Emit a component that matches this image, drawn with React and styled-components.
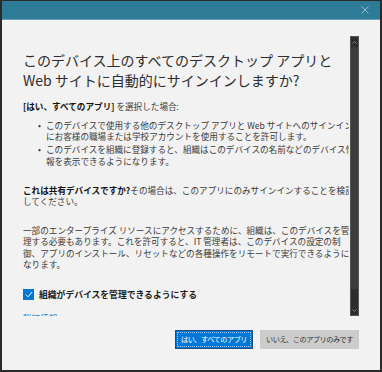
import React from "react";
import styled, { createGlobalStyle } from "styled-components";

const GlobalStyle = createGlobalStyle`
  html, body {
    margin: 0;
    padding: 0;
    background: #1f1f1f;
  }
  * {
    box-sizing: border-box;
  }
`;

const FONT = `"Noto Sans CJK JP", "Noto Sans", sans-serif`;

const Window = styled.div`
  width: 382px;
  height: 372px;
  display: flex;
  flex-direction: column;
  background: #f2f2f2;
  border-style: solid;
  border-color: #2a2a2a;
  border-width: 1px 2px 2px 2px;
  font-family: ${FONT};
  overflow: hidden;
`;

const TitleBar = styled.div`
  height: 19px;
  flex: none;
  background: #2e7b97;
  border-bottom: 1px solid #67a2b8;
  display: flex;
  justify-content: flex-end;
  align-items: center;
  padding-right: 9px;
`;

const CloseButton = styled.div`
  width: 12px;
  height: 12px;
  display: flex;
  align-items: center;
  justify-content: center;
  color: #8fbccd;
`;

const Main = styled.div`
  flex: none;
  display: flex;
  padding-top: 16px;
  height: 296px;
`;

const Content = styled.div`
  flex: 1;
  min-width: 0;
  overflow: hidden;
  padding: 14px 0 0 21px;
  white-space: nowrap;
  color: #3a3a3a;
  font-size: 8.6px;
  line-height: 11.5px;
`;

const Title = styled.h1`
  margin: 0;
  font-size: 14px;
  line-height: 20px;
  font-weight: 400;
  color: #2d2d2d;
`;

const Para = styled.p`
  margin: ${(p) => p.$top || 0}px 0 0;
`;

const Strong = styled.b`
  font-weight: 700;
  color: #111;
`;

const List = styled.ul`
  list-style: none;
  margin: 7px 0 0;
  padding: 0 0 0 15px;
  display: flex;
  flex-direction: column;
  gap: 1.5px;
`;

const Item = styled.li`
  display: flex;
`;

const Bullet = styled.span`
  width: 8px;
  flex: none;
`;

const CheckRow = styled.label`
  margin-top: 18px;
  display: flex;
  align-items: center;
  gap: 5px;
  font-weight: 700;
  color: #1c1c1c;
  font-size: 8.8px;
  line-height: 12px;
`;

const Box = styled.span`
  width: 11px;
  height: 11px;
  flex: none;
  background: #0078d7;
  display: flex;
  align-items: center;
  justify-content: center;
`;

const Link = styled.div`
  margin-top: 12px;
  color: #0067b8;
`;

const Scrollbar = styled.div`
  width: 9px;
  flex: none;
  margin: 0 21px 0 1px;
  height: 280px;
  background: #2d2d2d;
  border: 1px solid #555;
  display: flex;
  flex-direction: column;
`;

const Arrow = styled.div`
  height: 10px;
  flex: none;
  display: flex;
  align-items: center;
  justify-content: center;
  color: #8a8a8a;
`;

const Thumb = styled.div`
  flex: 1;
  background: #3c3c3c;
  margin-bottom: ${(p) => p.$gap}px;
`;

const Footer = styled.div`
  display: flex;
  justify-content: flex-end;
  gap: 7px;
  padding: 14px 21px 0 0;
`;

const Button = styled.button`
  width: ${(p) => p.$w}px;
  height: 19px;
  padding: 0;
  white-space: nowrap;
  font-family: ${FONT};
  font-size: 7.2px;
  letter-spacing: -0.5px;
  line-height: 17px;
  border: 1px solid ${(p) => (p.$primary ? "#1b4f86" : "#cccccc")};
  background: ${(p) => (p.$primary ? "#0078d7" : "#cccccc")};
  color: ${(p) => (p.$primary ? "#ffffff" : "#333333")};
  outline: ${(p) => (p.$primary ? "1px dotted #9ccaf0" : "none")};
  outline-offset: -3px;
`;

const Chevron = ({ up }) => (
  <svg width="5" height="3" viewBox="0 0 5 3">
    <path
      d={up ? "M0.5 2.5 L2.5 0.5 L4.5 2.5" : "M0.5 0.5 L2.5 2.5 L4.5 0.5"}
      fill="none"
      stroke="currentColor"
      strokeWidth="0.9"
    />
  </svg>
);

export default function App() {
  return (
    <>
      <GlobalStyle />
      <Window>
        <TitleBar>
          <CloseButton>
            <svg width="8" height="8" viewBox="0 0 8 8">
              <path d="M0.5 0.5 L7.5 7.5 M7.5 0.5 L0.5 7.5" stroke="currentColor" strokeWidth="1" />
            </svg>
          </CloseButton>
        </TitleBar>
        <Main>
          <Content>
            <Title>
              このデバイス上のすべてのデスクトップ アプリと
              <br />
              Web サイトに自動的にサインインしますか?
            </Title>
            <Para $top={11}>
              <Strong>[はい、すべてのアプリ]</Strong> を選択した場合:
            </Para>
            <List>
              <Item>
                <Bullet>•</Bullet>
                <span>
                  このデバイスで使用する他のデスクトップ アプリと Web サイトへのサインイン
                  <br />
                  にお客様の職場または学校アカウントを使用することを許可します。
                </span>
              </Item>
              <Item>
                <Bullet>•</Bullet>
                <span>
                  このデバイスを組織に登録すると、組織はこのデバイスの名前などのデバイス情
                  <br />
                  報を表示できるようになります。
                </span>
              </Item>
            </List>
            <Para $top={17.5}>
              <Strong>これは共有デバイスですか?</Strong>その場合は、このアプリにのみサインインすることを検討
              <br />
              してください。
            </Para>
            <Para $top={17}>
              一部のエンタープライズ リソースにアクセスするために、組織は、このデバイスを管
              <br />
              理する必要もあります。これを許可すると、IT 管理者は、このデバイスの設定の制
              <br />
              御、アプリのインストール、リセットなどの各種操作をリモートで実行できるように
              <br />
              なります。
            </Para>
            <CheckRow>
              <Box>
                <svg width="8" height="7" viewBox="0 0 8 7">
                  <path d="M0.8 3.6 L3 5.8 L7.2 1" fill="none" stroke="#fff" strokeWidth="1" />
                </svg>
              </Box>
              組織がデバイスを管理できるようにする
            </CheckRow>
            <Link>詳細情報</Link>
          </Content>
          <Scrollbar>
            <Arrow>
              <Chevron up />
            </Arrow>
            <Thumb $gap={16} />
            <Arrow>
              <Chevron />
            </Arrow>
          </Scrollbar>
        </Main>
        <Footer>
          <Button $primary $w={78}>はい、すべてのアプリ</Button>
          <Button $w={99}>いいえ、このアプリのみです</Button>
        </Footer>
      </Window>
    </>
  );
}
